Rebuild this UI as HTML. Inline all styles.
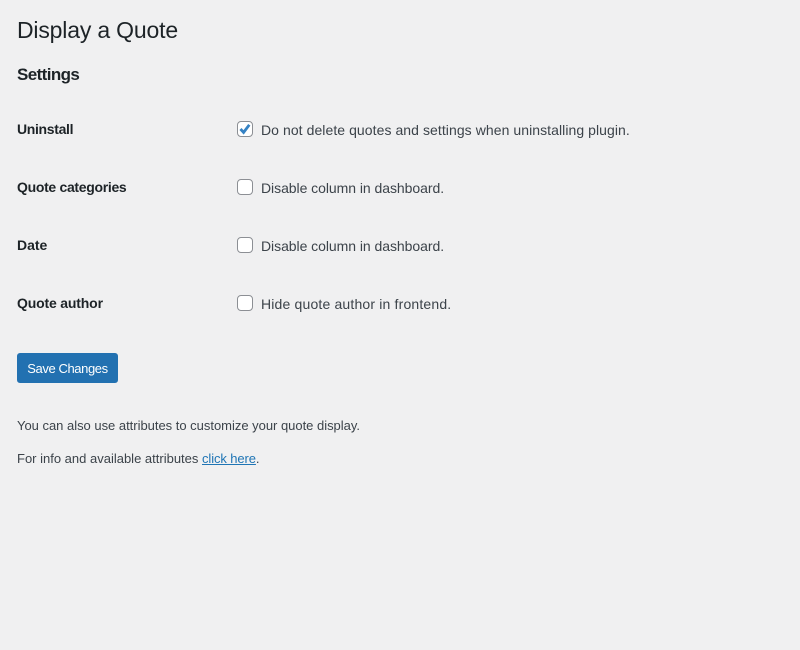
<!DOCTYPE html>
<html>
<head>
<meta charset="utf-8">
<style>
html,body{margin:0;padding:0;width:800px;height:650px;background:#f0f0f1;overflow:hidden}
body{font-family:"Liberation Sans",sans-serif;font-size:14px;color:#3c434a;position:relative}
.t{position:absolute;white-space:nowrap;line-height:20px}
h1,h2{margin:0;font-weight:400;color:#1d2327}
h1{font-size:23px}
h2{font-size:17px;font-weight:700;color:#1d2327}
b{color:#1d2327;font-weight:700}
.c{position:absolute;left:237px;width:14px;height:14px;border:1px solid #8c8f94;border-radius:4px;background:#fff;box-sizing:content-box}
.btn{position:absolute;left:17px;top:353px;width:101px;height:30px;background:#2271b1;border-radius:3px;color:#fff;font-size:13px;line-height:31px;text-align:center;letter-spacing:-.4px}
a{color:#1f75b5;text-decoration:underline;letter-spacing:-.1px}
</style>
</head>
<body>
<h1 class="t" style="left:17px;top:20px;letter-spacing:-.18px">Display a Quote</h1>
<h2 class="t" style="left:17px;top:65px;letter-spacing:-.6px">Settings</h2>

<b class="t" style="left:17px;top:119px;letter-spacing:-.33px">Uninstall</b>
<div class="c" style="top:121px"><svg width="14" height="14" viewBox="0 0 14 14" style="display:block"><path d="M2.5 7L5.6 10.4L11.3 2.8" fill="none" stroke="#3582c4" stroke-width="2.8"/></svg></div>
<span class="t" style="left:261px;top:120px;letter-spacing:.065px">Do not delete quotes and settings when uninstalling plugin.</span>

<b class="t" style="left:17px;top:177px;letter-spacing:-.31px">Quote categories</b>
<div class="c" style="top:179px"></div>
<span class="t" style="left:261px;top:178px;letter-spacing:-.05px">Disable column in dashboard.</span>

<b class="t" style="left:17px;top:235px">Date</b>
<div class="c" style="top:237px"></div>
<span class="t" style="left:261px;top:236px;letter-spacing:-.05px">Disable column in dashboard.</span>

<b class="t" style="left:17px;top:293px;letter-spacing:-.17px">Quote author</b>
<div class="c" style="top:295px"></div>
<span class="t" style="left:261px;top:294px;letter-spacing:.17px">Hide quote author in frontend.</span>

<div class="btn">Save Changes</div>

<span class="t" style="left:17px;top:416px;font-size:13px;letter-spacing:-.017px">You can also use attributes to customize your quote display.</span>
<span class="t" style="left:17px;top:449px;font-size:13px;letter-spacing:0">For info and available attributes <a>click here</a>.</span>
</body>
</html>
